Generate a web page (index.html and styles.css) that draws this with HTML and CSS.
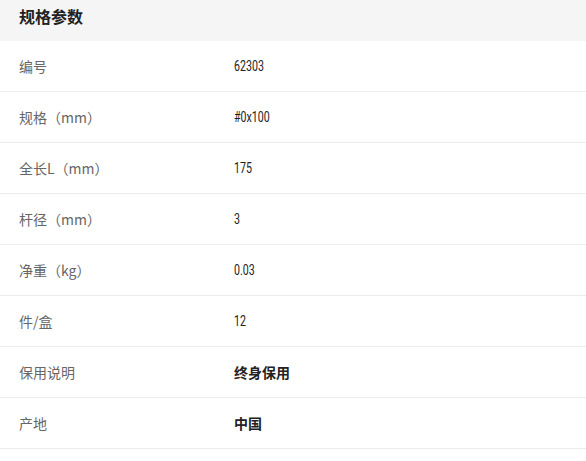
FILE: index.html
```html
<!DOCTYPE html>
<html lang="zh-CN">
<head>
<meta charset="utf-8">
<link rel="stylesheet" href="styles.css">
</head>
<body>
<section class="spec">
  <h2 class="spec-title">规格参数</h2>
  <div class="spec-list">
    <div class="spec-row"><span class="spec-label">编号</span><span class="spec-value"><span class="num">62303</span></span></div>
    <div class="spec-row"><span class="spec-label">规格（mm）</span><span class="spec-value"><span class="num">#0x100</span></span></div>
    <div class="spec-row"><span class="spec-label">全长L（mm）</span><span class="spec-value"><span class="num">175</span></span></div>
    <div class="spec-row"><span class="spec-label">杆径（mm）</span><span class="spec-value"><span class="num">3</span></span></div>
    <div class="spec-row"><span class="spec-label">净重（kg）</span><span class="spec-value"><span class="num">0.03</span></span></div>
    <div class="spec-row"><span class="spec-label">件/盒</span><span class="spec-value"><span class="num">12</span></span></div>
    <div class="spec-row"><span class="spec-label">保用说明</span><span class="spec-value spec-strong">终身保用</span></div>
    <div class="spec-row"><span class="spec-label">产地</span><span class="spec-value spec-strong">中国</span></div>
  </div>
</section>
</body>
</html>
```

FILE: styles.css
```css
html, body {
  margin: 0;
  padding: 0;
  background: #ffffff;
}

body {
  font-family: "Noto Sans CJK SC", "Noto Sans", sans-serif;
}

.spec-title {
  margin: 0;
  background: #f5f5f5;
  padding: 4px 19px 13px;
  font-size: 16px;
  line-height: 24px;
  font-weight: 700;
  color: #222222;
}

.spec-row {
  display: grid;
  grid-template-columns: 215px 1fr;
  align-items: center;
  height: 50px;
  padding-left: 19px;
  border-bottom: 1px solid #ececec;
  font-size: 14px;
}

.spec-label {
  color: #666666;
  font-family: "Noto Sans CJK SC", sans-serif;
}

.spec-value {
  color: #222222;
  font-family: "Roboto", "Liberation Sans", sans-serif;
}

.num {
  display: inline-block;
  font-size: 14px;
  transform: scaleX(0.76);
  transform-origin: left center;
}

.spec-strong {
  font-family: "Noto Sans CJK SC", sans-serif;
  font-weight: 700;
}
```
